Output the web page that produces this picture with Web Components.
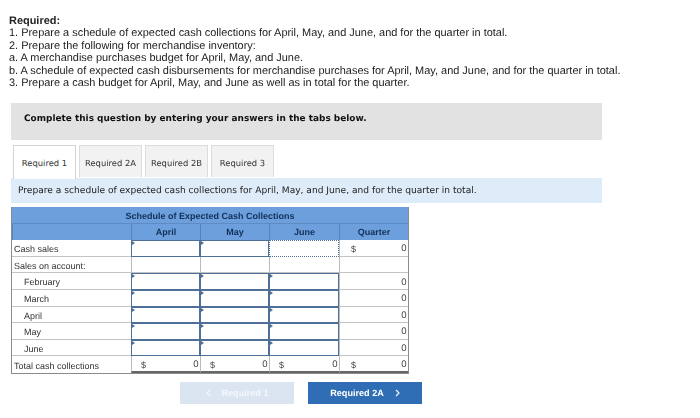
<!DOCTYPE html>
<html>
<head>
<meta charset="utf-8">
<style>
  html, body { margin: 0; background: #fff; }
  body { width: 700px; height: 418px; overflow: hidden; font-family: "Liberation Sans", Arial, sans-serif; text-rendering: geometricPrecision; }
  q-page { display: block; padding: 15px 98px 0 9px; filter: blur(.3px); }
</style>
</head>
<body>
<q-page>
  <q-required>
    <b slot="title">Required:</b>
    <div>1. Prepare a schedule of expected cash collections for April, May, and June, and for the quarter in total.</div>
    <div>2. Prepare the following for merchandise inventory:</div>
    <div>a. A merchandise purchases budget for April, May, and June.</div>
    <div>b. A schedule of expected cash disbursements for merchandise purchases for April, May, and June, and for the quarter in total.</div>
    <div>3. Prepare a cash budget for April, May, and June as well as in total for the quarter.</div>
  </q-required>
  <q-banner>Complete this question by entering your answers in the tabs below.</q-banner>
  <q-tabs>
    <q-tab active>Required 1</q-tab>
    <q-tab>Required 2A</q-tab>
    <q-tab>Required 2B</q-tab>
    <q-tab>Required 3</q-tab>
  </q-tabs>
  <q-hint>Prepare a schedule of expected cash collections for April, May, and June, and for the quarter in total.</q-hint>
  <q-schedule></q-schedule>
  <q-nav>
    <q-nav-button disabled dir="prev">Required 1</q-nav-button>
    <q-nav-button dir="next">Required 2A</q-nav-button>
  </q-nav>
</q-page>

<script>
function simple(name, css, html) {
  customElements.define(name, class extends HTMLElement {
    constructor() {
      super();
      this.attachShadow({ mode: "open" }).innerHTML = "<style>" + css + "</style>" + html;
    }
  });
}

simple("q-page", ":host{display:block}", "<slot></slot>");

simple("q-required",
  `:host{display:block;font-size:10.95px;line-height:12.4px;color:#222;height:75px;margin-bottom:13px;white-space:nowrap}
   .t{display:block}`,
  `<div class="t"><slot name="title"></slot></div><slot></slot>`);

simple("q-banner",
  `:host{display:block;margin-left:2px;height:37px;background:#e2e2e2;color:#111;
    font:bold 8.95px/32px "DejaVu Sans",Verdana,sans-serif;padding-left:13px;box-sizing:border-box}`,
  `<slot></slot>`);

simple("q-tabs",
  `:host{display:flex;gap:3px;margin:5px 0 0 4px;height:32px}`,
  `<slot></slot>`);

customElements.define("q-tab", class extends HTMLElement {
  constructor() {
    super();
    this.attachShadow({ mode: "open" }).innerHTML = `<style>
      :host{display:flex;align-items:center;justify-content:center;width:63px;box-sizing:border-box;
        font:8.4px "DejaVu Sans",Verdana,sans-serif;color:#333;background:#f2f2f2;padding-top:2px;
        border:1px solid #dcdcdc;border-bottom:0}
      :host([active]){background:#fff;height:34px;border-color:#d4d4d4;position:relative;z-index:1;color:#333;padding-top:0}
    </style><slot></slot>`;
  }
});

simple("q-hint",
  `:host{display:block;margin:1px 0 0 2px;height:25px;background:#deebf8;color:#222;
    font:9.1px/27px "DejaVu Sans",Verdana,sans-serif;padding-left:7px;box-sizing:border-box}`,
  `<slot></slot>`);

const ROWS = [
  { label: "Cash sales", first: true, quarter: "0", dollar: true, dotted: 2 },
  { label: "Sales on account:", blank: true },
  { label: "February", indent: true, quarter: "0" },
  { label: "March", indent: true, quarter: "0" },
  { label: "April", indent: true, quarter: "0" },
  { label: "May", indent: true, quarter: "0" },
  { label: "June", indent: true, quarter: "0" },
  { label: "Total cash collections", total: true }
];

customElements.define("q-schedule", class extends HTMLElement {
  constructor() {
    super();
    const root = this.attachShadow({ mode: "open" });
    let body = "";
    for (const r of ROWS) {
      body += `<div class="lab ${r.indent ? "ind" : ""} ${r.total ? "tot" : ""}">${r.label}</div>`;
      for (let c = 0; c < 3; c++) {
        if (r.total) body += `<div class="c amt tot"><span>$</span><span class="n">0</span></div>`;
        else if (r.blank) body += `<div class="c"></div>`;
        else if (r.dotted === c) body += `<div class="c dot"></div>`;
        else body += `<div class="c inp"></div>`;
      }
      if (r.total) body += `<div class="c amt tot q"><span>$</span><span class="n">0</span></div>`;
      else if (r.blank) body += `<div class="c q"></div>`;
      else body += `<div class="c amt q"><span>${r.dollar ? "$" : ""}</span><span class="n">${r.quarter}</span></div>`;
    }
    root.innerHTML = `<style>
      :host{display:block;margin:4px 0 0 2px;width:398px;box-sizing:border-box;
        border:1px solid #8a8a8a;border-top:0;font:9px "Liberation Sans",Arial,sans-serif;color:#333}
      .g{display:grid;grid-template-columns:119px 69px 69px 70px 69px;grid-auto-rows:16.6px}
      .title{grid-column:1/-1;height:17px;background:#6c9fdc;color:#12305a;font-weight:bold;
        text-align:center;line-height:18px;font-size:9px;border-bottom:1px solid #5d8cc4;box-sizing:border-box}
      .h{background:#6c9fdc;color:#12305a;font-weight:bold;text-align:center;line-height:17px;
        border-left:1px solid #5583bb;font-size:9px}
      .h:first-of-type{border-left:0}
      .lab{border-bottom:1px solid #c4c4c4;padding-left:2px;line-height:19px;box-sizing:border-box;white-space:nowrap}
      .ind{padding-left:12px}
      .lab.tot{border-bottom:0;line-height:20px}
      .c{border-left:1px solid #bbb;border-bottom:1px solid #c4c4c4;box-sizing:border-box;position:relative}
      .inp{border:1px solid #4f7096;border-bottom-width:1.5px;background:#fff}
      .inp::before{content:"";position:absolute;left:0;top:0;border-left:3px solid #4f7096;
        border-top:2px solid transparent;border-bottom:2px solid transparent}
      .dot{border:1px dotted #4f7096}
      .amt{display:flex;justify-content:space-between;align-items:center;padding:2px 1.5px 0 9px;color:#444}
      .n{font-size:9.6px}
      .q{padding-left:11px}
      .c.tot{border-bottom:2px solid #666}
    </style>
    <div class="g">
      <div class="title">Schedule of Expected Cash Collections</div>
      <div class="h"></div><div class="h">April</div><div class="h">May</div><div class="h">June</div><div class="h">Quarter</div>
      ${body}
    </div>`;
  }
});

simple("q-nav",
  `:host{display:flex;gap:14px;margin:8px 0 0 171px}`,
  `<slot></slot>`);

customElements.define("q-nav-button", class extends HTMLElement {
  constructor() {
    super();
    const prev = this.getAttribute("dir") === "prev";
    const chev = `<svg width="5" height="8" viewBox="0 0 5 8"><path d="${prev ? "M4 .8 1 4l3 3.2" : "M1 .8 4 4 1 7.2"}" fill="none" stroke="currentColor" stroke-width="1.2"/></svg>`;
    this.attachShadow({ mode: "open" }).innerHTML = `<style>
      :host{display:flex;align-items:center;justify-content:center;gap:11px;width:114px;height:22px;
        background:#2f6db5;color:#fff;font:bold 9.1px "Liberation Sans",Arial,sans-serif}
      :host([disabled]){background:#dbe5f1;color:#f4f7fb}
    </style>${prev ? chev : ""}<span><slot></slot></span>${prev ? "" : chev}`;
  }
});
</script>
</body>
</html>
